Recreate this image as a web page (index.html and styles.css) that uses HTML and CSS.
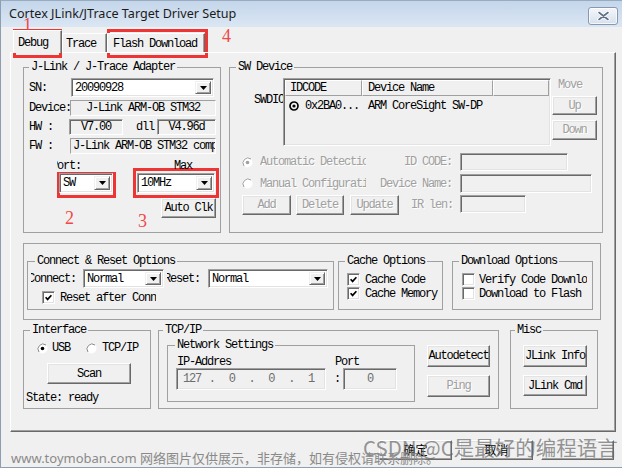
FILE: index.html
```html
<!DOCTYPE html>
<html>
<head>
<meta charset="utf-8">
<title>Cortex JLink/JTrace Target Driver Setup</title>
<link rel="stylesheet" href="styles.css">
</head>
<body>
<div class="window">
  <div class="titlebar">
    <span class="title">Cortex JLink/JTrace Target Driver Setup</span>
    <span class="close"><svg width="13" height="10" viewBox="0 0 13 10"><path d="M2 1.5 L11 8.5 M11 1.5 L2 8.5" stroke="#fff" stroke-width="3.4" stroke-linecap="round"/><path d="M2 1.5 L11 8.5 M11 1.5 L2 8.5" stroke="#5e6f86" stroke-width="1.6" stroke-linecap="round"/></svg></span>
  </div>
  <div class="client">
    <div class="tabs">
      <span class="tab tab-debug active">Debug</span>
      <span class="tab tab-trace">Trace</span>
      <span class="tab tab-flash">Flash Download</span>
    </div>
    <div class="panel">
      <div class="row row-top">
        <fieldset class="grp g-jlink">
          <legend>J-Link / J-Trace Adapter</legend>
          <div class="line l-sn">
            <span class="lbl">SN:</span>
            <span class="combo c-sn"><span class="ctext">20090928</span><span class="dd"><svg width="7" height="4" viewBox="0 0 7 4"><path d="M0 0H7L3.5 4Z"/></svg></span></span>
          </div>
          <div class="line l-dev">
            <span class="lbl">Device:</span>
            <span class="ro ro-dev">J-Link ARM-OB STM32</span>
          </div>
          <div class="line l-hw">
            <span class="lbl">HW :</span>
            <span class="ro deep ro-hw">V7.00</span>
            <span class="dll">dll</span>
            <span class="ro deep ro-dll">V4.96d</span>
          </div>
          <div class="line l-fw">
            <span class="lbl">FW :</span>
            <span class="ro ro-fw">J-Link ARM-OB STM32 compiled Aug 20 2009</span>
          </div>
          <div class="line l-port">
            <span class="clip clip-port"><span>Port:</span></span>
            <span class="lbl-max">Max</span>
          </div>
          <div class="line l-combo">
            <span class="combo c-port"><span class="ctext">SW</span><span class="dd"><svg width="7" height="4" viewBox="0 0 7 4"><path d="M0 0H7L3.5 4Z"/></svg></span></span>
            <span class="combo c-clk"><span class="ctext">10MHz</span><span class="dd"><svg width="7" height="4" viewBox="0 0 7 4"><path d="M0 0H7L3.5 4Z"/></svg></span></span>
          </div>
          <div class="line l-auto"><span class="btn b-auto">Auto Clk</span></div>
        </fieldset>

        <fieldset class="grp g-swd">
          <legend>SW Device</legend>
          <div class="l-swtop">
            <span class="clip swdio"><span>SWDIO</span></span>
            <div class="list">
              <div class="lhead"><span class="hc hc1">IDCODE</span><span class="hc hc2">Device Name</span><span class="hc hc3"></span></div>
              <div class="lrow">
                <svg width="10" height="10" viewBox="0 0 10 10"><circle cx="5" cy="5" r="4" fill="none" stroke="#000" stroke-width="1.7"/><circle cx="5" cy="5" r="1.6"/></svg>
                <span class="id">0x2BA0...</span><span class="dn">ARM CoreSight SW-DP</span>
              </div>
            </div>
            <div class="movecol">
              <span class="move dis">Move</span>
              <span class="btn dis b-up">Up</span>
              <span class="btn dis b-down">Down</span>
            </div>
          </div>
          <div class="line l-a">
            <span class="radcell"><svg width="11" height="11" viewBox="0 0 11 11"><circle cx="5.5" cy="5.5" r="5" fill="#fff"/><path d="M9 2A5 5 0 0 0 2 9" fill="none" stroke="#a0a0a0"/><circle cx="5.5" cy="5.5" r="1.8" fill="#a0a0a0"/></svg><span class="clip dis"><span>Automatic Detection</span></span></span>
            <span class="flbl dis">ID CODE:</span>
            <span class="inp i-id"></span>
          </div>
          <div class="line l-b">
            <span class="radcell"><svg width="11" height="11" viewBox="0 0 11 11"><circle cx="5.5" cy="5.5" r="5" fill="#fff"/><path d="M9 2A5 5 0 0 0 2 9" fill="none" stroke="#a0a0a0"/></svg><span class="clip dis"><span>Manual Configuration</span></span></span>
            <span class="flbl dis">Device Name:</span>
            <span class="inp i-dn"></span>
          </div>
          <div class="line l-c">
            <span class="btn dis b-add">Add</span>
            <span class="btn dis b-del">Delete</span>
            <span class="btn dis b-upd">Update</span>
            <span class="flbl dis">IR len:</span>
            <span class="inp i-ir"></span>
          </div>
        </fieldset>
      </div>

      <div class="opts">
        <fieldset class="grp g-conn">
          <legend>Connect &amp; Reset Options</legend>
          <div class="line l-conn">
            <span class="clip cl-conn"><span>Connect:</span></span>
            <span class="combo c-conn"><span class="ctext">Normal</span><span class="dd"><svg width="7" height="4" viewBox="0 0 7 4"><path d="M0 0H7L3.5 4Z"/></svg></span></span>
            <span class="clip cl-reset"><span>Reset:</span></span>
            <span class="combo c-reset"><span class="ctext">Normal</span><span class="dd"><svg width="7" height="4" viewBox="0 0 7 4"><path d="M0 0H7L3.5 4Z"/></svg></span></span>
          </div>
          <div class="line l-rac">
            <span class="chk"><svg width="7" height="7" viewBox="0 0 7 7"><path d="M0.6 3.2 L2.6 5.4 L6.4 1.2" fill="none" stroke="#000" stroke-width="1.7"/></svg></span>
            <span class="clip ct"><span>Reset after Connect</span></span>
          </div>
        </fieldset>
        <fieldset class="grp g-cache">
          <legend>Cache Options</legend>
          <div class="line l-ck1">
            <span class="chk"><svg width="7" height="7" viewBox="0 0 7 7"><path d="M0.6 3.2 L2.6 5.4 L6.4 1.2" fill="none" stroke="#000" stroke-width="1.7"/></svg></span>
            <span class="ct">Cache Code</span>
          </div>
          <div class="line l-ck2">
            <span class="chk"><svg width="7" height="7" viewBox="0 0 7 7"><path d="M0.6 3.2 L2.6 5.4 L6.4 1.2" fill="none" stroke="#000" stroke-width="1.7"/></svg></span>
            <span class="ct">Cache Memory</span>
          </div>
        </fieldset>
        <fieldset class="grp g-dl">
          <legend>Download Options</legend>
          <div class="line l-ck1">
            <span class="chk"></span>
            <span class="clip ct"><span>Verify Code Download</span></span>
          </div>
          <div class="line l-ck2">
            <span class="chk"></span>
            <span class="ct">Download to Flash</span>
          </div>
        </fieldset>
      </div>

      <div class="row row-bot">
        <fieldset class="grp g-if">
          <legend>Interface</legend>
          <div class="line l-usb">
            <svg width="11" height="11" viewBox="0 0 11 11"><circle cx="5.5" cy="5.5" r="5" fill="#fff"/><path d="M9 2A5 5 0 0 0 2 9" fill="none" stroke="#8a8a8a"/><circle cx="5.5" cy="5.5" r="1.8" fill="#000"/></svg>
            <span class="t-usb">USB</span>
            <svg class="r-tcp" width="11" height="11" viewBox="0 0 11 11"><circle cx="5.5" cy="5.5" r="5" fill="#fff"/><path d="M9 2A5 5 0 0 0 2 9" fill="none" stroke="#8a8a8a"/></svg>
            <span class="t-tcp">TCP/IP</span>
          </div>
          <span class="btn b-scan">Scan</span>
          <div class="state">State: ready</div>
        </fieldset>

        <fieldset class="grp g-tcp">
          <legend>TCP/IP</legend>
          <div class="tcp-in">
            <fieldset class="grp g-ns">
              <legend>Network Settings</legend>
              <div class="line l-iplbl">
                <span class="clip c-ipl"><span>IP-Address</span></span>
                <span class="portlbl">Port</span>
              </div>
              <div class="line l-ip">
                <span class="inp ip"><span class="oct">127</span><span class="dot">.</span><span class="oct">0</span><span class="dot">.</span><span class="oct">0</span><span class="dot">.</span><span class="oct">1</span></span>
                <span class="colon">:</span>
                <span class="inp port">0</span>
              </div>
            </fieldset>
            <div class="tcpbtns">
              <span class="btn b-autod">Autodetect</span>
              <span class="btn dis b-ping">Ping</span>
            </div>
          </div>
        </fieldset>

        <fieldset class="grp g-misc">
          <legend>Misc</legend>
          <span class="btn b-info">JLink Info</span>
          <span class="btn b-cmd">JLink Cmd</span>
        </fieldset>
      </div>
    </div>
    <div class="footer">
      <span class="btn fbtn">确定</span>
      <span class="btn fbtn">取消</span>
      <span class="btn fbtn"></span>
    </div>
  </div>

  <span class="mark m1"></span>
  <span class="mark m4"></span>
  <span class="mark m2"></span>
  <span class="mark m3"></span>
  <span class="num n1">1</span>
  <span class="num n4">4</span>
  <span class="num n2">2</span>
  <span class="num n3">3</span>
  <span class="wm-big">CSDN @C是最好的编程语言</span>
  <span class="wm-small">www.toymoban.com 网络图片仅供展示，非存储，如有侵权请联系删除。</span>
</div>
</body>
</html>
```

FILE: styles.css
```css
* { box-sizing: border-box; }
html, body { margin: 0; padding: 0; }
body {
  width: 622px; height: 468px; overflow: hidden;
  background: #f0f0f0;
  font-family: "Liberation Mono", monospace;
  font-size: 12px; line-height: 12px; letter-spacing: -1.2px;
  color: #000;
}
.window {
  position: relative; width: 622px; height: 468px;
  background: #f0f0f0;
  box-shadow: inset 1px 0 #8e9db0, inset 0 -1px #8e9db0;
}

/* title bar */
.titlebar {
  height: 27px; display: flex; align-items: flex-start; justify-content: space-between;
  padding: 0 4px 0 8px;
  background: linear-gradient(#c4d6eb, #dbe6f3);
  border-top: 1px solid #9aabbf;
  border-left: 1px solid #8e9db0;
}
.title {
  font-family: "Noto Sans", sans-serif; font-size: 12.6px; line-height: 16px;
  letter-spacing: 0; margin-top: 5px; color: #1b1b1b;
}
.close {
  width: 30px; height: 18px; margin-top: 6px;
  border: 1px solid #8799b0; border-radius: 3px;
  background: linear-gradient(#f4f7fb, #d6e0ed);
  box-shadow: inset 0 0 0 1px rgba(255,255,255,.7);
  display: flex; align-items: center; justify-content: center;
}
.close svg { display: block; }

/* tabs and panel */
.client { padding: 0 6px 0 10px; }
.tabs {
  height: 25px; display: flex; align-items: flex-end; padding-left: 3px;
  position: relative; z-index: 2;
}
.tab {
  height: 19px; padding-top: 4px; white-space: nowrap; background: #f0f0f0;
  border: 1px solid; border-bottom: 0; border-color: #fff #696969 #fff #fff;
  box-shadow: inset -1px 0 #a0a0a0;
}
.tab.active { height: 23px; margin-bottom: -1px; padding-top: 6px; }
.tab-debug { width: 49px; padding-left: 4px; }
.tab-trace { width: 45px; padding-left: 3px; }
.tab-flash { width: 98px; padding-left: 5px; }

.panel {
  position: relative; z-index: 1; height: 380px;
  border: 1px solid; border-color: #fff #696969 #696969 #fff;
  box-shadow: inset -1px -1px #a0a0a0;
  padding: 8px 0 0 12px;
}

/* generic controls */
.row { display: flex; align-items: flex-start; }
.line { display: flex; align-items: center; }
.grp {
  margin: 0; padding: 0; border: 1px solid #a0a0a0;
  min-width: 0; min-inline-size: 0;
}
.grp > legend { padding: 0 2px; margin-left: 5px; line-height: 12px; }
.lbl, .flbl, .dll { flex: none; white-space: nowrap; }
.clip { overflow: hidden; white-space: nowrap; flex: none; display: block; }
.dis { color: #a0a0a0; text-shadow: 1px 1px #fff; }
.btn {
  display: flex; align-items: center; justify-content: center; flex: none;
  background: #f0f0f0; white-space: nowrap;
  border: 1px solid; border-color: #fff #696969 #696969 #fff;
  box-shadow: inset -1px -1px #a0a0a0, inset 1px 1px #e3e3e3;
}
.combo {
  display: flex; align-items: stretch; height: 100%; flex: none;
  background: #fff; padding: 2px;
  border: 1px solid; border-color: #a0a0a0 #fff #fff #a0a0a0;
  box-shadow: inset 1px 1px #696969, inset -1px -1px #e3e3e3;
}
.ctext { flex: 1; display: flex; align-items: center; padding-left: 1px; overflow: hidden; white-space: nowrap; }
.dd {
  width: 16px; flex: none; display: flex; align-items: center; justify-content: center;
  background: #f0f0f0;
  border: 1px solid; border-color: #f0f0f0 #696969 #696969 #f0f0f0;
  box-shadow: inset 1px 1px #fff, inset -1px -1px #a0a0a0;
}
.dd svg { display: block; }
.ro {
  display: flex; align-items: center; justify-content: center; height: 100%; flex: none;
  background: #f0f0f0; white-space: nowrap; overflow: hidden;
  border: 1px solid; border-color: #a0a0a0 #fff #fff #a0a0a0;
}
.ro.deep { box-shadow: inset 1px 1px #696969; }
.inp {
  height: 100%; flex: none; background: #f0f0f0;
  border: 1px solid; border-color: #a0a0a0 #fff #fff #a0a0a0;
  box-shadow: inset 1px 1px #696969, inset -1px -1px #e3e3e3;
}
.chk {
  width: 13px; height: 13px; flex: none; background: #fff;
  display: flex; align-items: center; justify-content: center;
  border: 1px solid; border-color: #a0a0a0 #fff #fff #a0a0a0;
  box-shadow: inset 1px 1px #696969, inset -1px -1px #e3e3e3;
}
.chk svg { display: block; }
svg { flex: none; }

/* J-Link group */
.g-jlink { width: 198px; height: 172px; }
.g-jlink .line { margin-left: 5px; }
.l-sn { margin-top: 5px; height: 19px; }
.l-sn .lbl { width: 42px; }
.c-sn { width: 143px; }
.l-dev { margin-top: 3px; height: 16px; }
.l-dev .lbl { width: 41px; }
.ro-dev { width: 146px; }
.l-hw { margin-top: 3px; height: 16px; }
.l-hw .lbl { width: 40px; }
.ro-hw { width: 54px; }
.dll { width: 34px; padding-left: 13px; }
.ro-dll { width: 59px; }
.l-fw { margin-top: 3px; height: 16px; }
.l-fw .lbl { width: 41px; }
.ro-fw { width: 146px; justify-content: flex-start; padding-left: 2px; }
.l-port { margin-top: 6px; height: 12px; }
.clip-port { margin-left: 28px; width: 24px; }
.clip-port > span { margin-left: -6px; }
.lbl-max { margin-left: 93px; }
.l-combo { margin-top: 1px; height: 20px; }
.c-port { margin-left: 30px; width: 54px; }
.c-clk { margin-left: 24px; width: 78px; }
.l-auto { margin-top: 5px; height: 20px; }
.b-auto { margin-left: 132px; width: 55px; height: 20px; }

/* SW Device group */
.g-swd { width: 374px; height: 172px; margin-left: 8px; }
.g-swd > legend { margin-left: 6px; }
.l-swtop { display: flex; align-items: flex-start; margin-top: 5px; }
.swdio { margin-left: 24px; width: 29px; margin-top: 16px; }
.list {
  width: 268px; height: 68px; flex: none; background: #f0f0f0; padding: 1px;
  border: 1px solid; border-color: #a0a0a0 #fff #fff #a0a0a0;
  box-shadow: inset 1px 1px #696969, inset -1px -1px #e3e3e3;
}
.lhead { display: flex; height: 16px; }
.hc {
  height: 16px; flex: none; display: flex; align-items: center; white-space: nowrap;
  border: 1px solid; border-color: #fff #a0a0a0 #a0a0a0 #fff;
}
.hc1 { width: 77px; padding-left: 4px; }
.hc2 { width: 131px; padding-left: 5px; }
.hc3 { width: 56px; }
.lrow { display: flex; align-items: center; height: 20px; padding-left: 4px; white-space: nowrap; }
.lrow .id { margin-left: 6px; width: 63px; }
.movecol { margin-left: 1px; width: 45px; flex: none; display: flex; flex-direction: column; }
.move { margin-top: 1px; padding-left: 6px; height: 12px; }
.b-up { margin-top: 5px; height: 19px; }
.b-down { margin-top: 5px; height: 20px; }
.l-a { margin-top: 7px; height: 18px; padding-left: 12px; }
.l-b { margin-top: 3px; height: 19px; padding-left: 12px; }
.l-c { margin-top: 2px; height: 20px; padding-left: 12px; align-items: flex-start; }
.radcell { width: 138px; flex: none; display: flex; align-items: center; }
.radcell .clip { margin-left: 7px; width: 106px; }
.flbl { width: 72px; text-align: right; }
.i-id { margin-left: 8px; width: 108px; }
.i-dn { margin-left: 8px; width: 132px; }
.b-add { width: 49px; height: 20px; }
.b-del { margin-left: 5px; width: 48px; height: 20px; }
.b-upd { margin-left: 6px; width: 49px; height: 20px; }
.l-c .flbl { width: 54px; align-self: center; }
.i-ir { margin-left: 7px; width: 66px; height: 18px; }

/* options box */
.opts {
  margin-top: 10px; width: 578px; height: 77px;
  border: 1px solid #a0a0a0; padding: 11px 0 0 3px;
  display: flex; align-items: flex-start;
}
.g-conn { width: 307px; height: 55px; }
.g-conn > legend { margin-left: 7px; }
.l-conn { margin-top: 2px; height: 19px; }
.cl-conn { margin-left: 3px; width: 52px; }
.cl-conn > span { margin-left: -3px; }
.c-conn { width: 81px; }
.cl-reset { margin-left: 3px; width: 41px; }
.cl-reset > span { margin-left: -3px; }
.c-reset { width: 120px; }
.l-rac { margin-top: 3px; height: 13px; }
.l-rac .chk { margin-left: 14px; }
.ct { margin-left: 5px; white-space: nowrap; }
.l-rac .ct { width: 96px; }
.g-cache { margin-left: 4px; width: 105px; height: 55px; }
.g-cache > legend { margin-left: 6px; }
.g-cache .line { margin-left: 8px; }
.l-ck1 { margin-top: 6px; height: 13px; }
.l-ck2 { margin-top: 1px; height: 13px; }
.g-dl { margin-left: 9px; width: 141px; height: 55px; }
.g-dl > legend { margin-left: 6px; }
.g-dl .line { margin-left: 9px; }
.g-dl .ct { margin-left: 4px; }
.g-dl .clip.ct { width: 108px; }

/* bottom row */
.row-bot { margin-top: 4px; }
.g-if { width: 128px; height: 85px; }
.g-if > legend { margin-left: 6px; }
.l-usb { margin-top: 6px; height: 12px; margin-left: 13px; }
.t-usb { margin-left: 4px; }
.r-tcp { margin-left: 16px; }
.t-tcp { margin-left: 5px; }
.b-scan { margin-top: 9px; margin-left: 23px; width: 84px; height: 21px; }
.state { margin-top: 8px; margin-left: 2px; white-space: nowrap; }

.g-tcp { margin-left: 7px; width: 341px; height: 85px; }
.g-tcp > legend { margin-left: 4px; }
.tcp-in { display: flex; align-items: flex-start; margin-left: 8px; }
.g-ns { margin-top: 3px; width: 248px; height: 63px; flex: none; }
.g-ns > legend { margin-left: 7px; }
.l-iplbl { margin-top: 5px; height: 12px; margin-left: 9px; }
.c-ipl { width: 55px; }
.portlbl { margin-left: 103px; }
.l-ip { height: 22px; margin-left: 8px; }
.ip { width: 150px; display: flex; align-items: center; padding-left: 1px; color: #6d6d6d; }
.oct { width: 28px; text-align: center; }
.dot { width: 12px; text-align: center; }
.colon { margin-left: 8px; width: 6px; }
.port { margin-left: 3px; width: 54px; display: flex; align-items: center; justify-content: center; color: #6d6d6d; }
.tcpbtns { margin-left: 12px; width: 63px; flex: none; display: flex; flex-direction: column; }
.b-autod { margin-top: 9px; height: 22px; }
.b-ping { margin-top: 8px; height: 22px; }

.g-misc { margin-left: 11px; width: 88px; height: 85px; }
.g-misc > legend { margin-left: 4px; }
.b-info { margin-left: 12px; margin-top: 9px; width: 64px; height: 22px; }
.b-cmd { margin-left: 12px; margin-top: 8px; width: 64px; height: 21px; }

/* footer */
.footer { display: flex; gap: 8px; margin-top: 8px; padding-left: 369px; }
.fbtn {
  width: 73px; height: 20px;
  font-family: "Noto Sans CJK SC", sans-serif; font-size: 12px; letter-spacing: 0;
}

/* annotations overlaid on the screenshot */
.mark { position: absolute; border: 3px solid #ee3535; }
.m1 { left: 13px; top: 29px; width: 49px; height: 29px; }
.m4 { left: 107px; top: 29px; width: 101px; height: 29px; }
.m2 { left: 57px; top: 172px; width: 59px; height: 26px; }
.m3 { left: 133px; top: 168px; width: 86px; height: 30px; }
.num {
  position: absolute; font-family: "Liberation Serif", serif; font-size: 18px;
  line-height: 18px; color: #f04848; letter-spacing: 0;
}
.n1 { left: 23px; top: 16px; }
.n4 { left: 222px; top: 27px; }
.n2 { left: 65px; top: 209px; }
.n3 { left: 138px; top: 212px; }

.wm-big {
  position: absolute; left: 363px; top: 435px; white-space: nowrap;
  font-family: "Noto Sans CJK SC", sans-serif; font-size: 20.5px; line-height: 24px;
  letter-spacing: 0; color: rgba(105,105,105,0.7);
}
.wm-small {
  position: absolute; left: 11px; top: 450px; white-space: nowrap;
  font-family: "Noto Sans", "Noto Sans CJK SC", sans-serif; font-size: 13px; line-height: 16px;
  letter-spacing: 0; color: #8a8a8a;
}
```
